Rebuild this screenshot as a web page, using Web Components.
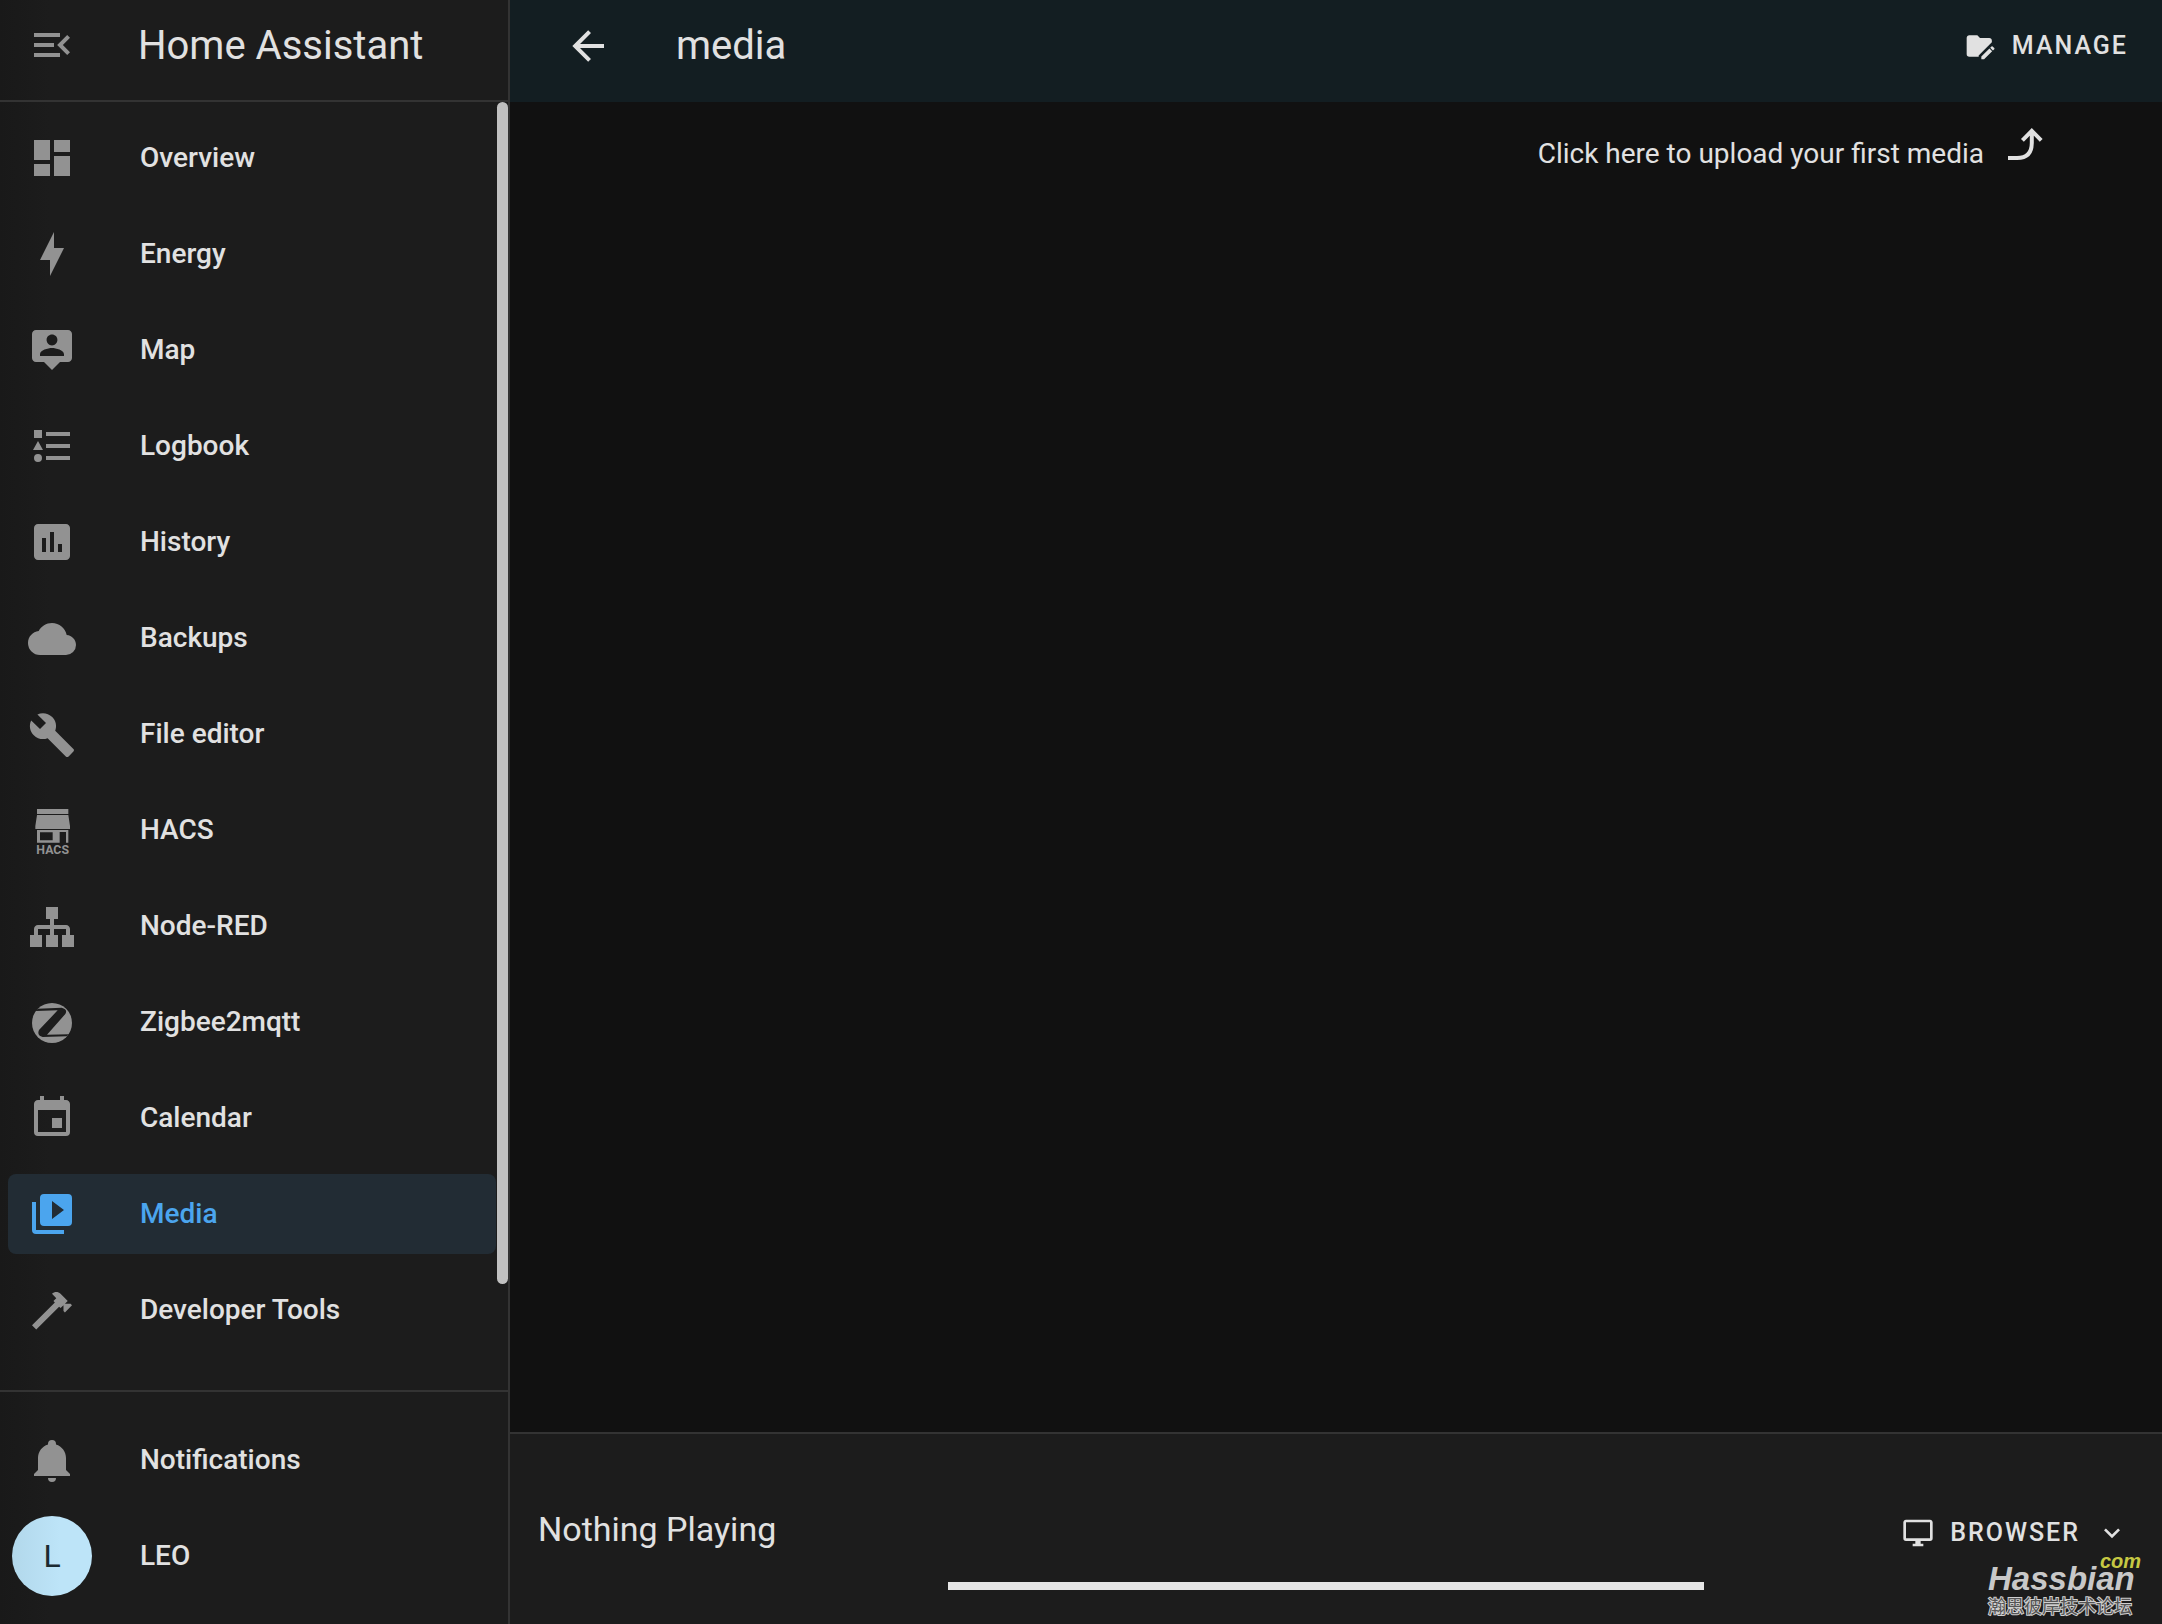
<!DOCTYPE html>
<html lang="en">
<head>
<meta charset="utf-8">
<title>Home Assistant</title>
<style>
  html, body { margin: 0; height: 100%; }
  body {
    background: #111111;
    color: #e1e1e1;
    font-family: Roboto, "Noto Sans", sans-serif;
    font-size: 28px;
    line-height: 36px;
    --panel: #1c1c1c;
    --divider: #333333;
    --header: #131e22;
    --muted: #929292;
    --accent: #4ba5ee;
  }
</style>
</head>
<body>
<media-app></media-app>

<script>
const ICONS = {
  'menu-open': '<path d="M21,15.61L19.59,17L14.58,12L19.59,7L21,8.39L17.44,12L21,15.61M3,6H16V8H3V6M3,13V11H13V13H3M3,18V16H16V18H3Z"/>',
  dashboard: '<path d="M13,3V9H21V3M13,21H21V11H13M3,21H11V15H3M3,13H11V3H3V13Z"/>',
  bolt: '<path d="M11 15H6L13 1V9H18L11 23V15Z"/>',
  map: '<path fill-rule="evenodd" d="M20 2H4C2.89 2 2 2.89 2 4V16C2 17.11 2.9 18 4 18H8L12 22L16 18H20C21.11 18 22 17.11 22 16V4C22 2.89 21.1 2 20 2M12 4.3C13.5 4.3 14.7 5.5 14.7 7S13.5 9.7 12 9.7 9.3 8.5 9.3 7 10.5 4.3 12 4.3M18 15H6V14.1C6 12.1 10 11 12 11S18 12.1 18 14.1V15Z"/>',
  list: '<path d="M5,9.5L7.5,14H2.5L5,9.5M3,4H7V8H3V4M5,20A2,2 0 0,0 7,18A2,2 0 0,0 5,16A2,2 0 0,0 3,18A2,2 0 0,0 5,20M9,5V7H21V5H9M9,19H21V17H9V19M9,13H21V11H9V13Z"/>',
  chart: '<path fill-rule="evenodd" d="M9 17H7V10H9V17M13 17H11V7H13V17M17 17H15V13H17V17M19 3H5C3.9 3 3 3.9 3 5V19C3 20.1 3.9 21 5 21H19C20.1 21 21 20.1 21 19V5C21 3.9 20.1 3 19 3Z"/>',
  cloud: { box: '0 -0.5 24 24', art: '<path d="M19.35,10.03C18.67,6.59 15.64,4 12,4C9.11,4 6.6,5.64 5.35,8.03C2.34,8.36 0,10.9 0,14A6,6 0 0,0 6,20H19A5,5 0 0,0 24,15C24,12.36 21.95,10.22 19.35,10.03Z"/>' },
  wrench: { box: '0 -0.5 24 24', art: '<path d="M22.7,19L13.6,9.9C14.5,7.6 14,4.9 12.1,3C10.1,1 7.1,0.6 4.7,1.7L9,6L6,9L1.6,4.7C0.4,7.1 0.9,10.1 2.9,12.1C4.8,14 7.5,14.5 9.8,13.6L18.9,22.7C19.3,23.1 19.9,23.1 20.3,22.7L22.6,20.4C23.1,20 23.1,19.3 22.7,19Z"/>' },
  store: { box: '84 78 144 144', art: '<path fill-rule="evenodd" d="M111 87H205V102H111ZM111 105H205L210 138V147H106V138ZM111 150H205V188H198V156H179V188H111ZM120 157V181H158V157Z"/><text x="158" y="222" font-family="Roboto, sans-serif" font-weight="700" font-size="37" text-anchor="middle">HACS</text>' },
  sitemap: { box: '0 -0.5 24 24', art: '<path d="M9,2V8H11V11H5C3.89,11 3,11.89 3,13V16H1V22H7V16H5V13H11V16H9V22H15V16H13V13H19V16H17V22H23V16H21V13C21,11.89 20.11,11 19,11H13V8H15V2H9Z"/>' },
  zigbee: { box: '84 654 144 144', art: '<circle cx="156" cy="729" r="60"/><path fill="#1c1c1c" d="M114 686L185 683Q204 688 196 702L141 764L208 763L199 769L128 771Q110 766 117 750L173 691L106 693Z"/>' },
  calendar: '<path fill-rule="evenodd" d="M19,19H5V8H19M16,1V3H8V1H6V3H5C3.89,3 3,3.89 3,5V19A2,2 0 0,0 5,21H19A2,2 0 0,0 21,19V5C21,3.89 20.1,3 19,3H18V1M17,12H12V17H17V12Z"/>',
  media: '<path fill-rule="evenodd" d="M4,6H2V20A2,2 0 0,0 4,22H18V20H4V6M20,2H8A2,2 0 0,0 6,4V16A2,2 0 0,0 8,18H20A2,2 0 0,0 22,16V4A2,2 0 0,0 20,2M12,14.5V5.5L18,10L12,14.5Z"/>',
  hammer: '<path d="M2 19.63L13.43 8.2L12.72 7.5L14.14 6.07L12 3.89C13.2 2.7 15.09 2.7 16.27 3.89L19.87 7.5L18.45 8.91H21.29L22 9.62L18.45 13.21L17.74 12.5V9.62L16.27 11.04L15.56 10.33L4.13 21.76L2 19.63Z"/>',
  bell: '<path d="M21,19V20H3V19L5,17V11C5,7.9 7.03,5.17 10,4.29C10,4.19 10,4.1 10,4A2,2 0 0,1 12,2A2,2 0 0,1 14,4C14,4.1 14,4.19 14,4.29C16.97,5.17 19,7.9 19,11V17L21,19M14,21A2,2 0 0,1 12,23A2,2 0 0,1 10,21"/>',
  back: '<path d="M20,11V13H8L13.5,18.5L12.08,19.92L4.16,12L12.08,4.08L13.5,5.5L8,11H20Z"/>',
  'folder-edit': '<path d="M4,4C2.89,4 2,4.89 2,6V18A2,2 0 0,0 4,20H11V19.1L20.9,9.2V8C20.9,6.89 20.1,6 19,6H12L10,4H4ZM21.04 12.13C20.9 12.13 20.76 12.19 20.65 12.3L19.65 13.3L21.7 15.35L22.7 14.35C22.92 14.14 22.92 13.79 22.7 13.58L21.42 12.3C21.31 12.19 21.18 12.13 21.04 12.13M19.07 13.88L13 19.94V22H15.06L21.12 15.93L19.07 13.88Z"/>',
  'arrow-turn-up': '<path fill="none" stroke="currentColor" stroke-width="2" d="M4 18H8.5C13.5 18 15.9 15.5 15.9 10.5V5M11.2 9.2L15.9 4.4L20.6 9.2"/>',
  monitor: '<path fill-rule="evenodd" d="M21,16H3V4H21M21,2H3C1.89,2 1,2.89 1,4V16A2,2 0 0,0 3,18H10V20H8V22H16V20H14V18H21A2,2 0 0,0 23,16V4C23,2.89 22.1,2 21,2Z"/>',
  'chevron-down': '<path d="M7.41,8.58L12,13.17L16.59,8.58L18,10L12,16L6,10L7.41,8.58Z"/>'
};

const define = (name, html, setup) => customElements.define(name, class extends HTMLElement {
  constructor() {
    super();
    this.attachShadow({ mode: 'open' }).innerHTML = html;
  }
  connectedCallback() { if (setup) setup(this, this.shadowRoot); }
});

define('app-icon', `
  <style>
    :host { display: block; flex: none; width: 48px; height: 48px; }
    :host([small]) { width: 32px; height: 32px; }
    svg { display: block; width: 100%; height: 100%; overflow: visible; fill: currentColor; }
  </style>
  <svg viewBox="0 0 24 24" aria-hidden="true"></svg>`,
  (host, root) => {
    const icon = ICONS[host.getAttribute('name')];
    const svg = root.querySelector('svg');
    if (icon.box) svg.setAttribute('viewBox', icon.box);
    svg.innerHTML = icon.art || icon;
  });

define('nav-item', `
  <style>
    :host { display: block; }
    a {
      display: flex; align-items: center; gap: 64px;
      height: 80px; padding-left: 20px; border-radius: 8px;
      color: inherit; text-decoration: none; font-weight: 500;
    }
    .lead { display: flex; flex: none; justify-content: center; width: 48px; color: var(--muted); }
    :host([selected]) a { background: #222c34; color: var(--accent); }
    :host([selected]) .lead { color: var(--accent); }
  </style>
  <a href="#"><span class="lead"><slot name="lead"></slot></span><slot></slot></a>`,
  (host, root) => {
    if (host.hasAttribute('selected')) root.querySelector('a').setAttribute('aria-current', 'page');
  });

define('user-badge', `
  <style>
    :host {
      display: flex; flex: none; align-items: center; justify-content: center;
      width: 80px; height: 80px; border-radius: 50%;
      background: linear-gradient(90deg, #b2d8eb, #bde4f8 60%);
      color: #1c2a31; font-size: 32px; font-weight: 400;
    }
  </style>
  <slot></slot>`);

define('side-bar', `
  <style>
    :host {
      display: flex; flex-direction: column; flex: none;
      box-sizing: border-box; width: 510px; height: 100%;
      border-right: 2px solid var(--divider);
      background: linear-gradient(90deg, #191919, var(--panel) 50px);
    }
    header {
      display: flex; align-items: center; gap: 62px;
      height: 90px; padding: 0 0 10px 28px;
      border-bottom: 2px solid var(--divider);
    }
    h1 { margin: 0; padding-top: 2px; font-size: 40px; line-height: 48px; font-weight: 400; }
    button { padding: 0; border: 0; background: none; color: var(--muted); }
    nav, footer { display: flex; flex-direction: column; gap: 16px; }
    nav { position: relative; flex: 1; min-height: 0; padding: 16px 12px 0 8px; }
    .thumb {
      position: absolute; top: 0; right: 0; bottom: 106px;
      width: 11px; border-radius: 6px; background: #c1c1c1;
    }
    footer { padding: 28px 12px 28px 8px; border-top: 2px solid var(--divider); }
  </style>
  <header>
    <button aria-label="Collapse sidebar"><app-icon name="menu-open"></app-icon></button>
    <h1>Home Assistant</h1>
  </header>
  <nav aria-label="Panels">
    <nav-item><app-icon slot="lead" name="dashboard"></app-icon>Overview</nav-item>
    <nav-item><app-icon slot="lead" name="bolt"></app-icon>Energy</nav-item>
    <nav-item><app-icon slot="lead" name="map"></app-icon>Map</nav-item>
    <nav-item><app-icon slot="lead" name="list"></app-icon>Logbook</nav-item>
    <nav-item><app-icon slot="lead" name="chart"></app-icon>History</nav-item>
    <nav-item><app-icon slot="lead" name="cloud"></app-icon>Backups</nav-item>
    <nav-item><app-icon slot="lead" name="wrench"></app-icon>File editor</nav-item>
    <nav-item><app-icon slot="lead" name="store"></app-icon>HACS</nav-item>
    <nav-item><app-icon slot="lead" name="sitemap"></app-icon>Node-RED</nav-item>
    <nav-item><app-icon slot="lead" name="zigbee"></app-icon>Zigbee2mqtt</nav-item>
    <nav-item><app-icon slot="lead" name="calendar"></app-icon>Calendar</nav-item>
    <nav-item selected><app-icon slot="lead" name="media"></app-icon>Media</nav-item>
    <nav-item><app-icon slot="lead" name="hammer"></app-icon>Developer Tools</nav-item>
    <div class="thumb"></div>
  </nav>
  <footer>
    <nav-item><app-icon slot="lead" name="bell"></app-icon>Notifications</nav-item>
    <nav-item><user-badge slot="lead">L</user-badge>LEO</nav-item>
  </footer>`);

define('text-button', `
  <style>
    :host { display: block; }
    button {
      display: flex; align-items: center; gap: 16px;
      padding: 0; border: 0; background: none; color: inherit;
      font-family: inherit; font-size: 25px; line-height: 32px; font-weight: 500;
      letter-spacing: 2px; text-transform: uppercase;
    }
  </style>
  <button><slot></slot></button>`);

define('top-bar', `
  <style>
    :host {
      display: flex; align-items: center; gap: 64px;
      height: 92px; padding: 0 34px 10px 54px;
      background: var(--header);
    }
    h2 { flex: 1; margin: 0; font-size: 40px; line-height: 48px; font-weight: 400; }
    .back { padding: 0; border: 0; background: none; color: inherit; }
  </style>
  <button class="back" aria-label="Back"><app-icon name="back"></app-icon></button>
  <h2><slot></slot></h2>
  <text-button><app-icon small name="folder-edit"></app-icon>Manage</text-button>`);

define('upload-hint', `
  <style>
    :host {
      display: flex; flex: 1; align-items: flex-start; justify-content: flex-end;
      padding: 20px 114px 0 28px; line-height: 32px;
    }
    p { display: flex; align-items: flex-end; gap: 16px; margin: 0; }
  </style>
  <p><slot></slot><app-icon name="arrow-turn-up"></app-icon></p>`);

define('player-bar', `
  <style>
    :host {
      display: grid; grid-template-columns: 22fr 38fr 23fr; align-items: center;
      height: 190px; border-top: 2px solid var(--divider); background: var(--panel);
    }
    .title { padding-left: 28px; font-size: 34px; line-height: 40px; }
    progress {
      align-self: end; display: block; width: 100%; height: 8px; margin-bottom: 34px;
      appearance: none; border: 0; background: #e5e5e5;
    }
    progress::-webkit-progress-bar { background: #e5e5e5; }
    progress::-webkit-progress-value { background: #e5e5e5; }
    text-button { justify-self: end; padding: 8px 34px 0 0; }
  </style>
  <div class="title">Nothing Playing</div>
  <progress value="0" max="1" aria-label="Playback position"></progress>
  <text-button><app-icon small name="monitor"></app-icon>Browser<app-icon small name="chevron-down"></app-icon></text-button>`);

define('site-mark', `
  <style>
    :host {
      position: absolute; right: 21px; bottom: 9px;
      display: flex; flex-direction: column; width: 153px;
      font-family: "Liberation Sans", sans-serif; pointer-events: none;
    }
    .com {
      align-self: flex-end; height: 12px;
      color: #c6c843; font-size: 20px; line-height: 20px; font-weight: 700; font-style: italic;
    }
    .name { color: #c8c8c8; font-size: 33px; line-height: 32px; font-weight: 700; font-style: italic; }
    .sub {
      color: #555555; font-family: "Noto Sans CJK SC", sans-serif;
      font-size: 18px; line-height: 20px; font-weight: 400;
      -webkit-text-stroke: 2px #cfcfcf; paint-order: stroke fill;
    }
  </style>
  <span class="com">com</span>
  <span class="name">Hassbian</span>
  <span class="sub">瀚思彼岸技术论坛</span>`);

define('media-app', `
  <style>
    :host { position: relative; display: flex; height: 100vh; overflow: hidden; }
    main { display: flex; flex: 1; flex-direction: column; min-width: 0; }
  </style>
  <side-bar></side-bar>
  <main>
    <top-bar>media</top-bar>
    <upload-hint>Click here to upload your first media</upload-hint>
    <player-bar></player-bar>
  </main>
  <site-mark></site-mark>`);
</script>
</body>
</html>
